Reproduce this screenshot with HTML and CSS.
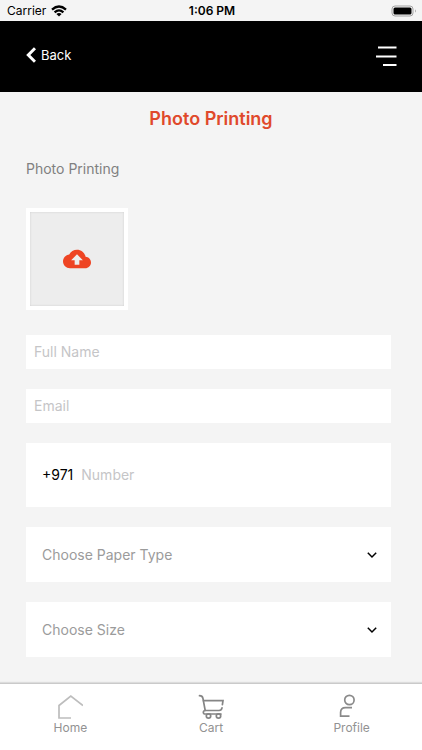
FILE: index.html
```html
<!DOCTYPE html>
<html lang="en">
<head>
<meta charset="utf-8">
<meta name="viewport" content="width=device-width, initial-scale=1">
<title>Photo Printing</title>
<link rel="stylesheet" href="styles.css">
</head>
<body>
<div class="status">
  <div class="status-side">
    <span>Carrier</span>
    <svg width="16" height="12" viewBox="0 0 16 12" aria-hidden="true">
      <g fill="none" stroke="#000" stroke-width="2.300">
        <path d="M1 4.600Q8-1.600 15 4.600"/>
        <path d="M3.600 7.300Q8 3.400 12.400 7.300"/>
      </g>
      <path d="M5.400 8.900Q8 6.900 10.600 8.900L8 11.500Z"/>
    </svg>
  </div>
  <time class="clock">1:06 PM</time>
  <div class="status-side status-end">
    <svg width="26" height="12" viewBox="0 0 26 12" aria-hidden="true">
      <rect x="1" y="1" width="21" height="10" rx="3" fill="none" stroke="#a2a2a2"/>
      <rect x="2.500" y="2.500" width="18" height="7" rx="1.500"/>
      <path d="M24 4.200Q25.600 6 24 7.800Z" fill="#8c8c8c"/>
    </svg>
  </div>
</div>
<header class="header">
  <a class="back" href="#">
    <svg width="10" height="16" viewBox="0 0 10 16" aria-hidden="true"><path d="M9 1.200L2.300 8l6.700 6.800" fill="none" stroke="#fff" stroke-width="3"/></svg>
    <span>Back</span>
  </a>
  <button class="menu" type="button" aria-label="Menu">
    <svg width="22" height="22" viewBox="0 0 22 22" aria-hidden="true"><path d="M2 3.500h18.500M0 12.500h20.500M7 21h13.500" stroke="#fff" stroke-width="2"/></svg>
  </button>
</header>
<main class="main">
  <h1 class="title">Photo Printing</h1>
  <form class="form">
    <label class="upload-label" for="photo">Photo Printing</label>
    <button class="upload" id="photo" type="button" aria-label="Upload photo">
      <svg width="28" height="28" viewBox="0 0 24 24" aria-hidden="true"><path fill="#ee4423" d="M19.350 10.040C18.670 6.590 15.640 4 12 4 9.110 4 6.600 5.640 5.350 8.040 2.340 8.360 0 10.910 0 14c0 3.310 2.690 6 6 6h13c2.760 0 5-2.240 5-5 0-2.640-2.050-4.780-4.650-4.960zM14 13v4h-4v-4H7l5-5 5 5h-3z"/></svg>
    </button>
    <input class="field" type="text" placeholder="Full Name" aria-label="Full Name">
    <input class="field" type="email" placeholder="Email" aria-label="Email">
    <div class="phone">
      <label for="number">+971</label>
      <input class="number" id="number" type="tel" placeholder="Number">
    </div>
    <div class="choice">
      <select aria-label="Choose Paper Type"><option>Choose Paper Type</option></select>
      <svg class="chevron" width="12" height="8" viewBox="0 0 12 8" aria-hidden="true"><path d="M1.800 1.800L6 6l4.200-4.200" fill="none" stroke="#000" stroke-width="1.500"/></svg>
    </div>
    <div class="choice">
      <select aria-label="Choose Size"><option>Choose Size</option></select>
      <svg class="chevron" width="12" height="8" viewBox="0 0 12 8" aria-hidden="true"><path d="M1.800 1.800L6 6l4.200-4.200" fill="none" stroke="#000" stroke-width="1.500"/></svg>
    </div>
  </form>
</main>
<nav class="tabs">
  <a class="tab" href="#">
    <svg width="26" height="26" viewBox="0 0 26 26" aria-hidden="true"><path d="M14 24H2V11.500L13.800 2 26 11.500" fill="none" stroke="#bdbdbd" stroke-width="1.700"/></svg>
    <span>Home</span>
  </a>
  <a class="tab" href="#">
    <svg width="26" height="26" viewBox="0 0 26 26" aria-hidden="true">
      <g fill="none" stroke="#858585" stroke-width="1.700" stroke-linecap="round">
        <path d="M1.500 1.700C3.800 1.700 4.500 2.300 4.900 4.200L7.200 16.500"/>
        <path d="M5.500 6.700H25L24.400 10.600"/>
        <path d="M24 13.800Q23.500 16.300 21 16.500H7.200C4.800 16.500 4.700 20 7 20H23"/>
        <circle cx="10.500" cy="22" r="2.200"/><circle cx="20.500" cy="22" r="2.200"/>
      </g>
    </svg>
    <span>Cart</span>
  </a>
  <a class="tab" href="#">
    <svg width="26" height="26" viewBox="0 0 26 26" aria-hidden="true">
      <g fill="none" stroke="#8a8a8a" stroke-width="1.700"><circle cx="10.400" cy="6" r="4.700"/><path d="M13 13.600H6.500Q1.600 13.600 1.600 18.500V22.200H10.500"/></g>
    </svg>
    <span>Profile</span>
  </a>
</nav>
</body>
</html>
```
FILE: styles.css
```css
* {
  box-sizing: border-box;
}

body {
  margin: 0;
  min-height: 100vh;
  display: flex;
  flex-direction: column;
  background: #f4f4f4;
  font-family: Inter, "Liberation Sans", sans-serif;
  font-size: 14px;
  line-height: 20px;
}

button,
input,
select {
  margin: 0;
  border: 0;
  border-radius: 0;
  padding: 0;
  background: none;
  font: inherit;
}

a {
  color: inherit;
  text-decoration: none;
}

svg {
  display: block;
}

.status {
  display: flex;
  align-items: center;
  height: 21px;
  padding: 0 5px 0 7px;
  font-size: 12px;
}

.status-side {
  flex: 1;
  display: flex;
  align-items: center;
  gap: 5px;
}

.status-end {
  justify-content: flex-end;
}

.clock {
  font-weight: 600;
}

.header {
  display: flex;
  align-items: center;
  justify-content: space-between;
  height: 71px;
  padding: 0 24px 3px 26px;
  background: #000;
  color: #fff;
}

.back {
  display: flex;
  align-items: center;
  gap: 5px;
  font-size: 13px;
}

.main {
  flex: 1;
  padding: 17px 31px 25px 26px;
}

.title {
  margin: 0 -5px 0 0;
  color: #e0492b;
  font-size: 18px;
  font-weight: 600;
  line-height: 20px;
  text-align: center;
}

.form {
  display: flex;
  flex-direction: column;
  gap: 20px;
  padding-top: 30px;
}

.upload-label {
  color: #808080;
  margin-bottom: 9px;
}

.upload {
  display: flex;
  align-items: center;
  justify-content: center;
  width: 102px;
  height: 102px;
  margin-bottom: 5px;
  border: 4px solid #fff;
  background: #ededed;
  box-shadow: inset 0 0 2px #c8c8c8;
}

.field {
  height: 34px;
  padding: 0 8px 2px;
  background: #fff;
}

.phone {
  display: flex;
  align-items: center;
  gap: 8px;
  height: 64px;
  padding: 0 16px;
  background: #fff;
}

.number {
  flex: 1;
  min-width: 0;
}

input::placeholder {
  color: #c5c5c7;
  opacity: 1;
}

.choice {
  position: relative;
}

.choice select {
  display: block;
  appearance: none;
  width: 100%;
  height: 55px;
  padding: 0 40px 0 16px;
  background: #fff;
  color: #9b9b9b;
}

.chevron {
  position: absolute;
  top: 24px;
  right: 13px;
  pointer-events: none;
}

.tabs {
  display: grid;
  grid-template-columns: repeat(3, 1fr);
  height: 67px;
  padding-top: 10px;
  border-top: 1px solid #cacaca;
  background: #fff;
  box-shadow: 0 -1px 1px #dcdcdc;
}

.tab {
  display: flex;
  flex-direction: column;
  align-items: center;
  color: #929292;
  font-size: 12px;
  line-height: 16px;
}
```
